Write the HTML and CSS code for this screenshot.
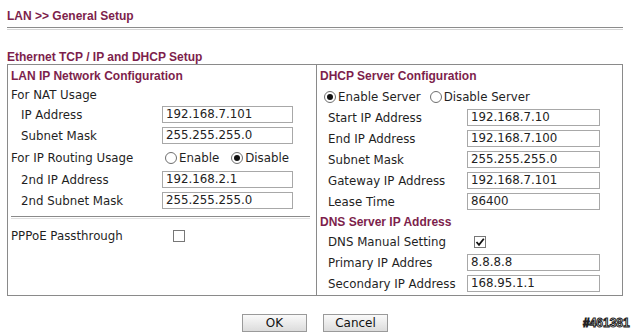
FILE: index.html
```html
<!DOCTYPE html>
<html lang="en">
<head>
    <meta charset="UTF-8">
    <title>LAN General Setup</title>
    <link rel="stylesheet" href="styles.css">
</head>
<body>

    <div class="page">
        <h1 class="title">LAN &gt;&gt; General Setup</h1>
        <div class="rule"></div>

        <h2 class="section">Ethernet TCP / IP and DHCP Setup</h2>

        <div class="setup">
            <div class="col col-left">
                <div class="row head">LAN IP Network Configuration</div>
                <div class="row nat">For NAT Usage</div>
                <div class="row sub">
                    <span class="label">IP Address</span>
                    <span class="field">192.168.7.101</span>
                </div>
                <div class="row sub">
                    <span class="label">Subnet Mask</span>
                    <span class="field">255.255.255.0</span>
                </div>
                <div class="row routing">
                    <span class="label">For IP Routing Usage</span>
                    <span class="radios">
                        <span class="radio"></span>Enable
                        <span class="radio on gap"></span>Disable
                    </span>
                </div>
                <div class="row sub">
                    <span class="label">2nd IP Address</span>
                    <span class="field">192.168.2.1</span>
                </div>
                <div class="row sub">
                    <span class="label">2nd Subnet Mask</span>
                    <span class="field">255.255.255.0</span>
                </div>
                <div class="divider"></div>
                <div class="row pppoe">
                    <span class="label">PPPoE Passthrough</span>
                    <span class="check"></span>
                </div>
            </div>

            <div class="col col-right">
                <div class="row head">DHCP Server Configuration</div>
                <div class="row server">
                    <span class="radio on"></span>Enable Server
                    <span class="radio gap"></span>Disable Server
                </div>
                <div class="row sub">
                    <span class="label">Start IP Address</span>
                    <span class="field">192.168.7.10</span>
                </div>
                <div class="row sub">
                    <span class="label">End IP Address</span>
                    <span class="field">192.168.7.100</span>
                </div>
                <div class="row sub">
                    <span class="label">Subnet Mask</span>
                    <span class="field">255.255.255.0</span>
                </div>
                <div class="row sub">
                    <span class="label">Gateway IP Address</span>
                    <span class="field">192.168.7.101</span>
                </div>
                <div class="row sub">
                    <span class="label">Lease Time</span>
                    <span class="field">86400</span>
                </div>
                <div class="row head dns">DNS Server IP Address</div>
                <div class="row sub">
                    <span class="label">DNS Manual Setting</span>
                    <span class="check on">
                        <svg width="10" height="10" viewBox="0 0 10 10"><path d="M1.5 5 L4 7.8 L8.8 1.8" fill="none" stroke="#111" stroke-width="1.8"/></svg>
                    </span>
                </div>
                <div class="row sub">
                    <span class="label">Primary IP Addres</span>
                    <span class="field">8.8.8.8</span>
                </div>
                <div class="row sub">
                    <span class="label">Secondary IP Address</span>
                    <span class="field">168.95.1.1</span>
                </div>
            </div>
        </div>

        <div class="buttons">
            <span class="btn">OK</span>
            <span class="btn">Cancel</span>
            <span class="stamp">#461381</span>
        </div>
    </div>

</body>
</html>
```

FILE: styles.css
```css
body {
    margin: 0;
    background: #fff;
    color: #1f1f1f;
    font-family: 'DejaVu Sans', sans-serif;
    font-size: 11.8px;
}
.page {
    padding: 9px 0 0 7px;
    width: 616px;
}
.title {
    margin: 0;
    height: 14px;
    line-height: 14px;
    font-family: 'Liberation Sans', Arial, sans-serif;
    font-size: 12px;
    font-weight: bold;
    color: #7d1f4c;
}
.rule {
    margin-top: 4px;
    height: 1px;
    border-top: 1px solid #8c8c8c;
    border-bottom: 1px solid #d6d6d6;
    width: 616px;
}
.section {
    margin: 20px 0 0 0;
    height: 14px;
    line-height: 14px;
    font-family: 'Liberation Sans', Arial, sans-serif;
    font-size: 12px;
    font-weight: bold;
    color: #7d1f4c;
}
.setup {
    display: flex;
    border: 1px solid #8a8a8a;
    width: 614px;
    height: 230px;
}
.col {
    padding-top: 1px;
}
.col-left {
    width: 308px;
    border-right: 1px solid #8a8a8a;
}
.col-right {
    flex: 1;
}
.row {
    display: flex;
    align-items: center;
    height: 21px;
    white-space: nowrap;
}
.head {
    height: 20px;
    padding-left: 3px;
    font-family: 'Liberation Sans', Arial, sans-serif;
    font-size: 12px;
    font-weight: bold;
    color: #7d1f4c;
}
.head.dns {
    height: 19px;
}
.nat {
    height: 18px;
    padding-left: 3px;
}
.col-left .sub .label {
    width: 141px;
    padding-left: 13px;
}
.col-right .sub .label {
    width: 139px;
    padding-left: 11px;
}
.routing {
    margin-top: 1px;
    height: 22px;
}
.routing .label {
    width: 154px;
    padding-left: 3px;
}
.pppoe {
    margin-top: -1px;
}
.pppoe .label {
    width: 157px;
    padding-left: 3px;
}
.field {
    box-sizing: border-box;
    width: 131px;
    height: 17px;
    line-height: 15px;
    border: 1px solid #a8a8a8;
    padding-left: 3px;
    color: #222;
}
.col-right .field {
    width: 133px;
}
.radios {
    display: flex;
    align-items: center;
}
.server {
    padding-left: 7px;
}
.radio {
    box-sizing: border-box;
    display: inline-flex;
    align-items: center;
    justify-content: center;
    width: 12px;
    height: 12px;
    margin-right: 2px;
    border: 1px solid #6e6e6e;
    border-radius: 50%;
    background: #fff;
}
.radio.on::after {
    content: '';
    width: 6px;
    height: 6px;
    border-radius: 50%;
    background: #111;
}
.radio.gap {
    margin-left: 12px;
}
.server .radio.gap {
    margin-left: 9px;
}
.check {
    box-sizing: border-box;
    display: inline-flex;
    align-items: center;
    justify-content: center;
    width: 12px;
    height: 12px;
    margin-left: 5px;
    border: 1px solid #777;
    background: #fff;
}
.check.on {
    margin-left: 7px;
}
.divider {
    margin: 5px 6px 7px 3px;
    height: 1px;
    border-top: 1px solid #8a8a8a;
    border-bottom: 1px solid #e0e0e0;
}
.buttons {
    display: flex;
    align-items: center;
    margin-top: 18px;
    padding-left: 235px;
    height: 18px;
}
.btn {
    flex-shrink: 0;
    box-sizing: border-box;
    width: 65px;
    height: 18px;
    line-height: 16px;
    margin-right: 16px;
    text-align: center;
    border: 1px solid #9a9a9a;
    background: linear-gradient(#fafafa, #dcdcdc);
    font-size: 12px;
    color: #111;
}
.stamp {
    flex-shrink: 0;
    margin-left: 179px;
    font-family: 'Liberation Sans', Arial, sans-serif;
    font-size: 12px;
    font-weight: bold;
    color: #fff;
    -webkit-text-stroke: 1px #222;
    white-space: nowrap;
}
```
